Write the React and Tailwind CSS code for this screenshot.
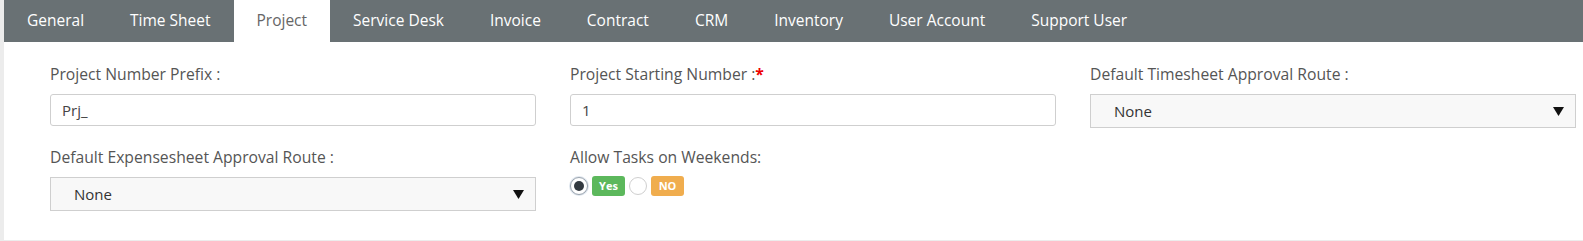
import React from 'react';

const tabs = ['General', 'Time Sheet', 'Project', 'Service Desk', 'Invoice', 'Contract', 'CRM', 'Inventory', 'User Account', 'Support User'];

function Caret() {
  return (
    <svg width="11" height="9" viewBox="0 0 11 9" className="shrink-0">
      <path d="M0 0 H11 L5.5 9 Z" fill="#111" />
    </svg>
  );
}

function Select({ value }) {
  return (
    <div className="h-[34px] border border-[#cfcfcf] bg-[#f8f8f8] flex items-center justify-between pl-[23px] pr-[11px] text-[15px] text-[#333]">
      <span>{value}</span>
      <Caret />
    </div>
  );
}

function TextInput({ value }) {
  return (
    <div className="h-[32px] border border-[#cfcfcf] rounded-[3px] bg-white flex items-center pl-[11px] text-[15px] text-[#444]">
      {value}
    </div>
  );
}

function Label({ children, required }) {
  return (
    <div className="text-[15.7px] leading-[20px] text-[#555] mb-[10px]">
      {children}
      {required && <span className="text-[#e00] font-bold">*</span>}
    </div>
  );
}

export default function App() {
  return (
    <div className="w-[1583px] bg-white border-l-4 border-b-[3px] border-[#ececec]" style={{ fontFamily: '"Open Sans", "Liberation Sans", sans-serif' }}>
      {/* tab bar */}
      <div className="h-[42px] bg-[#697174] flex">
        {tabs.map((t) => (
          <div
            key={t}
            className={
              t === 'Project'
                ? 'px-[23px] flex items-center text-[15.5px] bg-white text-[#666]'
                : 'px-[23px] flex items-center text-[15.5px] text-white'
            }
          >
            {t}
          </div>
        ))}
      </div>

      {/* settings form */}
      <div className="pl-[46px] pt-[22px] pb-[29px] grid grid-cols-[486px_486px_486px] gap-x-[34px] gap-y-[19px]">
        <div>
          <Label>Project Number Prefix :</Label>
          <TextInput value="Prj_" />
        </div>
        <div>
          <Label required>Project Starting Number :</Label>
          <TextInput value="1" />
        </div>
        <div>
          <Label>Default Timesheet Approval Route :</Label>
          <Select value="None" />
        </div>
        <div>
          <Label>Default Expensesheet Approval Route :</Label>
          <Select value="None" />
        </div>
        <div>
          <div className="text-[15.7px] leading-[20px] text-[#555] mb-[9px]">Allow Tasks on Weekends:</div>
          <div className="flex items-center">
            <span className="w-[18px] h-[18px] rounded-full border border-[#9aa3ad] bg-white flex items-center justify-center shadow-[0_0_0_1px_#dfe6ee]">
              <span className="w-[10px] h-[10px] rounded-full bg-[#333a40]" />
            </span>
            <span className="ml-[4px] h-[20px] w-[33px] rounded-[3px] bg-[#5cb85c] text-white text-[11px] font-bold flex items-center justify-center">Yes</span>
            <span className="ml-[4px] w-[18px] h-[18px] rounded-full border border-[#cfcfcf] bg-white" />
            <span className="ml-[4px] h-[20px] w-[33px] rounded-[3px] bg-[#f0ad4e] text-white text-[11px] font-bold flex items-center justify-center">NO</span>
          </div>
        </div>
      </div>
    </div>
  );
}
